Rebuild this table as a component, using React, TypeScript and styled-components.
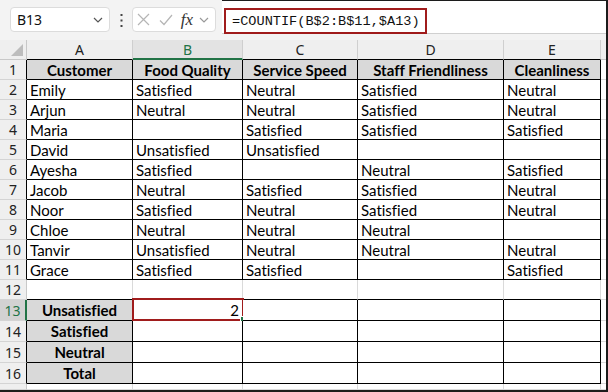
import React from 'react';
import styled, { createGlobalStyle } from 'styled-components';

const GlobalStyle = createGlobalStyle`
  html, body {
    margin: 0;
    padding: 0;
    background: #ffffff;
  }
`;

const GREEN = '#217346';
const RED = '#a01c1c';
const GRID = '#dadada';
const INK = '#000000';

const Frame = styled.div`
  width: 608px;
  height: 392px;
  box-sizing: border-box;
  border-right: 2px solid #1c1c1c;
  border-bottom: 2px solid #1c1c1c;
  background: #f3f3f3;
  display: flex;
  flex-direction: column;
  overflow: hidden;
  font-family: Lato, 'Liberation Sans', sans-serif;
  font-variant-ligatures: none;
`;

const FormulaBar = styled.div`
  height: 40px;
  flex: none;
  display: flex;
  align-items: flex-start;
  padding-left: 10px;
  box-sizing: border-box;
`;

const Pill = styled.div<{ width: number }>`
  margin-top: 7px;
  width: ${(p) => p.width}px;
  height: 25px;
  box-sizing: border-box;
  background: #ffffff;
  border: 1px solid #dcdcdc;
  border-radius: 4px;
  display: flex;
  align-items: center;
`;

const NameText = styled.span`
  flex: 1;
  padding-left: 6px;
  font-family: 'Noto Sans', sans-serif;
  font-size: 14px;
  color: #111;
`;

const Dots = styled.div`
  width: 22px;
  height: 40px;
  display: flex;
  align-items: center;
  justify-content: center;
`;

const IconSlot = styled.span`
  display: flex;
  align-items: center;
  justify-content: center;
  width: 22px;
`;

const Fx = styled.span`
  font-family: 'Liberation Serif', serif;
  font-style: italic;
  font-size: 17px;
  color: #333;
  margin-left: 4px;
`;

const FormulaInput = styled.div`
  flex: 1;
  align-self: stretch;
  height: 34px;
  margin-left: 6px;
  box-sizing: border-box;
  background: #ffffff;
  border-top: 1px solid #1c1c1c;
  border-bottom: 1px solid #d0d0d0;
  padding: 7px 0 0 2px;
`;

const FormulaMark = styled.div`
  display: inline-flex;
  align-items: center;
  height: 26px;
  box-sizing: border-box;
  border: 2px solid ${RED};
  padding: 0 5px 0 6px;
  font-family: 'Liberation Mono', monospace;
  font-size: 13.6px;
  color: #111;
`;

const Sheet = styled.div`
  flex: 1;
  display: grid;
  grid-template-columns: 27px 106px 110px 115px 146px 97px 1fr;
  grid-template-rows: 20px repeat(12, 20px) repeat(4, 21px) 1fr;
  background: #ffffff;
`;

const Corner = styled.div`
  position: relative;
  background: #efefef;
  border-right: 1px solid #c8c8c8;
  border-bottom: 1px solid #c8c8c8;
  box-sizing: border-box;
`;

const CornerTriangle = styled.div`
  position: absolute;
  right: 3px;
  bottom: 3px;
  width: 0;
  height: 0;
  border-left: 12px solid transparent;
  border-bottom: 12px solid #bdbdbd;
`;

const ColHead = styled.div<{ $active?: boolean; $under: string }>`
  box-sizing: border-box;
  background: ${(p) => (p.$active ? '#e3e3e3' : '#efefef')};
  border-right: 1px solid #cfcfcf;
  border-bottom: ${(p) => (p.$active ? `2px solid ${GREEN}` : `1px solid ${p.$under}`)};
  display: flex;
  align-items: center;
  justify-content: center;
  font-family: 'Noto Sans', sans-serif;
  font-size: 14px;
  color: ${(p) => (p.$active ? GREEN : '#222')};
`;

const RowHead = styled.div<{ $active?: boolean; $edge: string }>`
  box-sizing: border-box;
  background: ${(p) => (p.$active ? '#d2d2d2' : '#efefef')};
  border-right: ${(p) => (p.$active ? `2px solid ${GREEN}` : `1px solid ${p.$edge}`)};
  border-bottom: 1px solid #d4d4d4;
  display: flex;
  align-items: center;
  justify-content: center;
  font-family: 'Noto Sans', sans-serif;
  font-size: 14px;
  color: ${(p) => (p.$active ? GREEN : '#222')};
`;

const Cell = styled.div<{
  $right: string;
  $bottom: string;
  $label?: boolean;
  $align?: 'left' | 'center' | 'right';
}>`
  position: relative;
  box-sizing: border-box;
  border-right: 1px solid ${(p) => p.$right};
  border-bottom: 1px solid ${(p) => p.$bottom};
  background: ${(p) => (p.$label ? '#d9d9d9' : '#ffffff')};
  display: flex;
  align-items: center;
  justify-content: ${(p) =>
    p.$align === 'center' ? 'center' : p.$align === 'right' ? 'flex-end' : 'flex-start'};
  padding: 0 3px;
  font-size: 15px;
  font-weight: ${(p) => (p.$label ? 700 : 400)};
  color: #000;
  white-space: nowrap;
  overflow: visible;
`;

const Selection = styled.div`
  position: absolute;
  left: -1px;
  top: -2px;
  right: -2px;
  bottom: -1px;
  border: 2px solid ${RED};
  pointer-events: none;
`;

const Handle = styled.div`
  position: absolute;
  right: -5px;
  bottom: -4px;
  width: 5px;
  height: 5px;
  background: ${GREEN};
  border: 1px solid #ffffff;
`;

const columns = ['A', 'B', 'C', 'D', 'E', ''];

const header = ['Customer', 'Food Quality', 'Service Speed', 'Staff Friendliness', 'Cleanliness'];

const responses: string[][] = [
  ['Emily', 'Satisfied', 'Neutral', 'Satisfied', 'Neutral'],
  ['Arjun', 'Neutral', 'Neutral', 'Satisfied', 'Neutral'],
  ['Maria', '', 'Satisfied', 'Satisfied', 'Satisfied'],
  ['David', 'Unsatisfied', 'Unsatisfied', '', ''],
  ['Ayesha', 'Satisfied', '', 'Neutral', 'Satisfied'],
  ['Jacob', 'Neutral', 'Satisfied', 'Satisfied', 'Neutral'],
  ['Noor', 'Satisfied', 'Neutral', 'Satisfied', 'Neutral'],
  ['Chloe', 'Neutral', 'Neutral', 'Neutral', ''],
  ['Tanvir', 'Unsatisfied', 'Neutral', 'Neutral', 'Neutral'],
  ['Grace', 'Satisfied', 'Satisfied', '', 'Satisfied'],
];

const summary = ['Unsatisfied', 'Satisfied', 'Neutral', 'Total'];

// rows 1..17 (17 = the cut-off row at the bottom)
const rowValues = (row: number): string[] => {
  if (row === 1) return header;
  if (row >= 2 && row <= 11) return responses[row - 2];
  if (row >= 13 && row <= 16) {
    const vals = [summary[row - 13], '', '', '', ''];
    if (row === 13) vals[1] = '2';
    return vals;
  }
  return ['', '', '', '', ''];
};

// cells inside the bordered tables
const boxed = (row: number, col: number) =>
  col >= 0 && col <= 4 && ((row >= 1 && row <= 11) || (row >= 13 && row <= 16));

const isLabel = (row: number, col: number) => row === 1 || (row >= 13 && row <= 16 && col === 0);

const XIcon = () => (
  <svg width='13' height='13' viewBox='0 0 13 13'>
    <path d='M1 1 L12 12 M12 1 L1 12' stroke='#b5b5b5' strokeWidth='1.2' fill='none' />
  </svg>
);

const CheckIcon = () => (
  <svg width='14' height='12' viewBox='0 0 14 12'>
    <path d='M1 6.5 L5 10.5 L13 1' stroke='#b5b5b5' strokeWidth='1.2' fill='none' />
  </svg>
);

const Chevron = ({ color = '#555' }: { color?: string }) => (
  <svg width='10' height='6' viewBox='0 0 10 6'>
    <path d='M1 1 L5 5 L9 1' stroke={color} strokeWidth='1.2' fill='none' />
  </svg>
);

const VDots = () => (
  <svg width='3' height='13' viewBox='0 0 3 13'>
    <rect x='0.5' y='0' width='2' height='2' fill='#444' />
    <rect x='0.5' y='5.5' width='2' height='2' fill='#444' />
    <rect x='0.5' y='11' width='2' height='2' fill='#444' />
  </svg>
);

const App = () => {
  const rows = Array.from({ length: 17 }, (_, i) => i + 1);

  return (
    <Frame>
      <GlobalStyle />
      <FormulaBar>
        <Pill width={100}>
          <NameText>B13</NameText>
          <IconSlot>
            <Chevron />
          </IconSlot>
        </Pill>
        <Dots>
          <VDots />
        </Dots>
        <Pill width={84}>
          <IconSlot>
            <XIcon />
          </IconSlot>
          <IconSlot>
            <CheckIcon />
          </IconSlot>
          <Fx>fx</Fx>
          <IconSlot>
            <Chevron color='#999' />
          </IconSlot>
        </Pill>
        <FormulaInput>
          <FormulaMark>=COUNTIF(B$2:B$11,$A13)</FormulaMark>
        </FormulaInput>
      </FormulaBar>

      <Sheet>
        <Corner>
          <CornerTriangle />
        </Corner>
        {columns.map((c, ci) => (
          <ColHead key={ci} $active={c === 'B'} $under={boxed(1, ci) ? INK : '#c8c8c8'}>
            {c}
          </ColHead>
        ))}

        {rows.map((row) => {
          const vals = rowValues(row);
          const cells = [0, 1, 2, 3, 4, 5].map((ci) => {
            const inBox = boxed(row, ci);
            const right = inBox || boxed(row, ci + 1) ? INK : GRID;
            const bottom = inBox || boxed(row + 1, ci) ? INK : GRID;
            const label = ci < 5 && isLabel(row, ci);
            const value = ci < 5 ? vals[ci] : '';
            const align = label ? 'center' : row === 13 && ci === 1 ? 'right' : 'left';
            return (
              <Cell key={ci} $right={right} $bottom={bottom} $label={label} $align={align}>
                {value}
                {row === 13 && ci === 1 && (
                  <Selection>
                    <Handle />
                  </Selection>
                )}
              </Cell>
            );
          });
          return (
            <React.Fragment key={row}>
              <RowHead $active={row === 13} $edge={boxed(row, 0) ? INK : '#c8c8c8'}>
                {row <= 16 ? row : ''}
              </RowHead>
              {cells}
            </React.Fragment>
          );
        })}
      </Sheet>
    </Frame>
  );
};

export default App;
